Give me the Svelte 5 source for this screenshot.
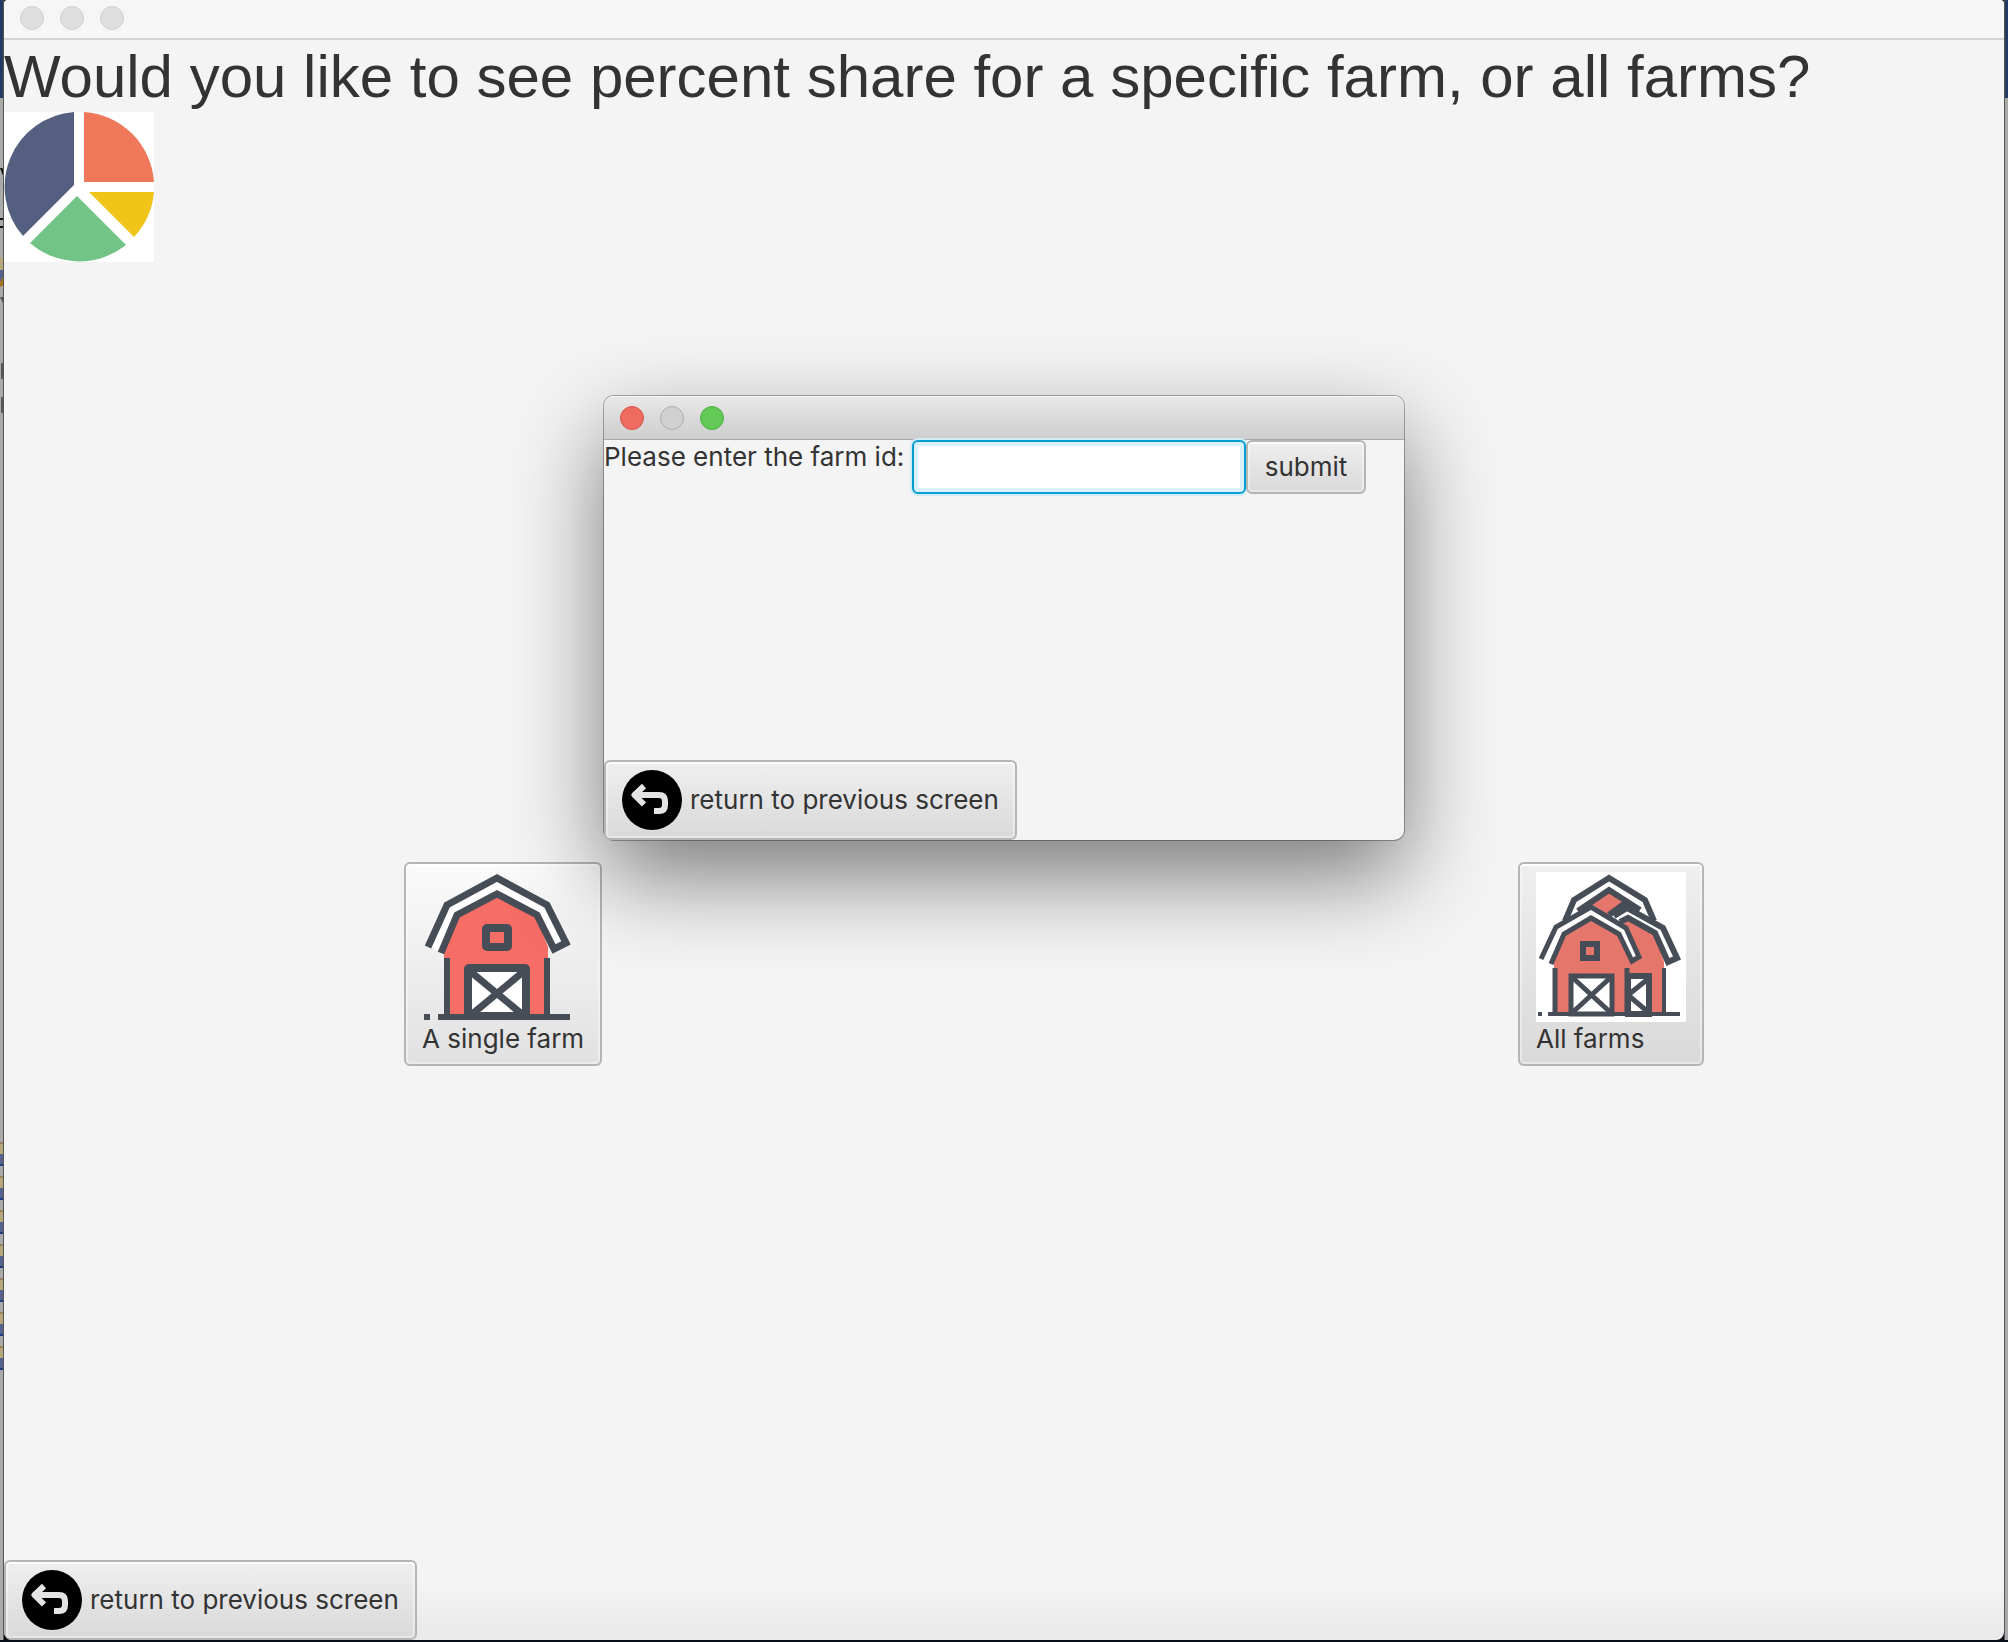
<script>
  let farmId = $state('');
  const windowDots = ['off', 'off', 'off'];
  const dialogDots = ['red', 'grey', 'green'];
</script>

{#snippet dots(kinds)}
  <span class="dots">
    {#each kinds as kind}
      <button class="dot {kind}" type="button" aria-label="Window control"></button>
    {/each}
  </span>
{/snippet}

{#snippet returnButton()}
  <button class="btn back" type="button">
    <svg width="60" height="60" viewBox="0 0 60 60" aria-hidden="true">
      <circle cx="30" cy="30" r="30" fill="#000" />
      <path d="M22 16 L12.500 25 L22 34.500 M13 25 H37 Q43 25 43 31 V35 Q43 41 37 41 H32" fill="none" stroke="#e4e4e4" stroke-width="6" stroke-linejoin="round" />
    </svg>
    <span>return to previous screen</span>
  </button>
{/snippet}

<div class="desktop">
  <div class="strip left">
    <svg width="4" height="440" viewBox="0 0 4 440" aria-hidden="true">
      <path d="M0 168 L4 178 V170 L2 168Z M0 218 H4 V220 H0Z M0 226 H4 V228 H0Z" fill="#111" />
      <path d="M0 258 H4 V270 H0Z" fill="#b6a77c" />
      <path d="M0 270 H4 V278 L2 285 H0Z" fill="#57628c" />
      <path d="M0 282 L4 275 V285 L0 287Z" fill="#a8721f" />
      <path d="M0 297 H4 V305Z M1 363 H4 V379 H1Z M1 397 H4 V413 H1Z" fill="#555" />
    </svg>
  </div>
  <main class="window">
    <header class="titlebar">{@render dots(windowDots)}</header>
    <h1>Would you like to see percent share for a specific farm, or all farms?</h1>
    <svg class="pie" width="150" height="150" viewBox="0 0 150 150" aria-hidden="true">
      <rect width="150" height="150" fill="#fff" />
      <path d="M70 0 V73 L19 124 A75 75 0 0 1 70 0Z" fill="#556080" />
      <path d="M80 0 A75 75 0 0 1 150 70 H80Z" fill="#f0785a" />
      <path d="M85 80 H150 A75 75 0 0 1 130 125Z" fill="#f0c419" />
      <path d="M73 84 L122 133 A75 75 0 0 1 26 131Z" fill="#71c386" />
    </svg>

    <div class="choices">
      <button class="btn farm single" type="button">
        <svg width="150" height="150" viewBox="0 0 150 150" aria-hidden="true">
          <path d="M22 147 V75 L36 43 L75 21 L114 43 L126 75 V147Z" fill="#f66d65" />
          <path d="M6 74 L25 33 L75 6 L125 33 L144 71 L132 77 L115 43 L75 22 L35 43 L18 80Z" fill="#fff" />
          <g fill="none" stroke="#464d57" stroke-width="7">
            <path d="M6 75 L25 33 L75 6 L125 33 L144 71 L132 77 L115 43 L75 22 L35 43 L19 81" />
            <path d="M25 86 V144 M125 86 V144 M2 145 H8 M16 145 H148" stroke-width="6" />
            <rect x="64" y="56" width="22" height="19" rx="1" stroke-width="8" />
          </g>
          <rect x="46" y="96" width="58" height="48" rx="1" fill="#fff" stroke="#464d57" stroke-width="8" />
          <path d="M49 100 L101 143 M101 100 L49 143" stroke="#464d57" stroke-width="7" />
        </svg>
        <span>A single farm</span>
      </button>

      <button class="btn farm" type="button">
        <svg width="150" height="150" viewBox="0 0 150 150" aria-hidden="true">
          <rect width="150" height="150" fill="#fff" />
          <path d="M54 31 L73 19 L93 31 L73 44Z" fill="#e5766b" />
          <path d="M88 44 L105 50 L120 65 L128 90 V142 H90Z" fill="#e5766b" />
          <g fill="none" stroke="#464d57" stroke-width="6">
            <path d="M29 49 L38 28 L73 6 L109 28 L118 49" />
            <path d="M42 39 L73 18 L104 38" />
            <path d="M92 29 L73 43" />
            <path d="M78 44 L91 36 L127 56 L141 86 L132 90 L119 61 L92 46 L84 50" fill="#fff" />
            <path d="M128 96 V142" stroke-width="4" />
            <path d="M92 104 H113 V142 H92Z" fill="#fff" />
            <path d="M92 123 L112 107 M92 123 L112 140" stroke-width="5" />
          </g>
          <path d="M18 142 V88 L29 62 L55 46 L83 62 L93 88 V142Z" fill="#e5766b" />
          <path d="M5 86 L19 55 L55 35 L90 56 L103 86 L95 90 L83 62 L55 46 L28 62 L15 90Z" fill="#fff" />
          <g fill="none" stroke="#464d57" stroke-width="6">
            <path d="M5 87 L20 55 L55 35 L90 56 L103 85 L96 89 L83 62 L55 46 L28 62 L15 92" stroke-width="5" />
            <path d="M19 96 V142 M91 96 V142" stroke-width="5" />
            <rect x="47" y="72" width="14" height="14" />
            <rect x="35" y="104" width="41" height="38" fill="#fff" stroke-width="5" />
            <path d="M37 106 L74 140 M74 106 L37 140" stroke-width="5" />
            <path d="M2 142 H6 M12 142 H144" stroke-width="4" />
          </g>
        </svg>
        <span>All farms</span>
      </button>
    </div>

    {@render returnButton()}

    <div class="dialog" role="dialog" aria-label="Farm id">
      <header class="dialog-bar">{@render dots(dialogDots)}</header>
      <form class="form" onsubmit={(e) => e.preventDefault()}>
        <label for="farm-id">Please enter the farm id:</label>
        <input id="farm-id" type="text" bind:value={farmId} />
        <button class="btn submit" type="submit">submit</button>
      </form>
      {@render returnButton()}
    </div>
  </main>
  <div class="strip right"></div>
</div>

<style>
  :global(body) { background: #0a0f17; }
  .desktop {
    box-sizing: border-box;
    display: flex;
    min-height: 100vh;
    padding-bottom: 2px;
    color: #333;
    font: 26px/30px Inter, "Liberation Sans", sans-serif;
  }
  .strip {
    box-sizing: border-box;
    flex: 0 0 4px;
    overflow: hidden;
    background: linear-gradient(#233a66 98px, #aaa 98px);
  }
  .strip svg { display: block; }
  .left {
    border-right: 1px solid #555;
    background:
      repeating-linear-gradient(#99815b 0 2px, #b6a77c 2px 12px, #57628c 12px 22px, #1d3b83 22px 24px, #aaa 24px 34px) 0 1142px / 4px 228px no-repeat,
      linear-gradient(#233a66 98px, #aaa 98px);
  }
  .right { border-left: 1px solid #555; }
  .window {
    position: relative;
    flex: 1;
    display: flex;
    flex-direction: column;
    align-items: flex-start;
    border-radius: 4px 4px 8px 8px;
    overflow: hidden;
    background: linear-gradient(to top, #e9e9e9, #f4f4f4 60px);
  }
  .titlebar {
    box-sizing: border-box;
    align-self: stretch;
    height: 40px;
    padding: 6px 16px;
    background: #f6f6f6;
    border-bottom: 2px solid #d3d3d3;
  }
  .dots { display: flex; gap: 16px; }
  .dot {
    width: 24px;
    height: 24px;
    padding: 0;
    border: 1px solid #cfcfcf;
    border-radius: 50%;
    background: #dedede;
  }
  .red { background: #ee6b5f; border-color: #d6554b; }
  .grey { background: #d0d0d0; border-color: #aeaeae; }
  .green { background: #62c956; border-color: #4fae43; }
  h1 {
    margin: 0;
    padding-top: 2px;
    font: 400 60px/70px "Liberation Sans", Arial, sans-serif;
  }
  .pie { display: block; }
  .choices {
    align-self: stretch;
    display: flex;
    justify-content: space-between;
    margin: 600px 300px auto 400px;
  }
  .btn {
    box-sizing: border-box;
    font: inherit;
    color: inherit;
    border: 2px solid #b5b5b5;
    border-radius: 6px;
    background: linear-gradient(#efefef, #d9d9d9);
    box-shadow: inset 0 0 0 2px #ffffff60, inset 0 2px 0 #fff;
  }
  .back {
    display: flex;
    align-items: center;
    gap: 8px;
    height: 80px;
    padding: 0 16px;
  }
  .farm {
    display: flex;
    flex-direction: column;
    align-items: flex-start;
    height: 204px;
    padding: 8px 16px;
  }
  .farm span { margin-top: 2px; }
  .single { background: linear-gradient(#fbfbfb, #e1e1e1); }
  .dialog {
    position: absolute;
    top: 396px;
    left: 30%;
    width: 40%;
    height: 444px;
    display: flex;
    flex-direction: column;
    align-items: flex-start;
    border-radius: 10px;
    background: #f4f4f4;
    box-shadow: 0 0 0 1px #0000004d, 0 36px 90px #00000080;
  }
  .dialog-bar {
    box-sizing: border-box;
    align-self: stretch;
    height: 44px;
    padding: 10px 16px;
    border-bottom: 1px solid #a9a9a9;
    border-radius: 10px 10px 0 0;
    background: linear-gradient(#e8e8e8, #cecece);
    box-shadow: inset 0 1px 0 #f6f6f6;
  }
  .form {
    display: flex;
    align-items: flex-start;
    margin-bottom: auto;
  }
  .form label { width: 308px; line-height: 34px; white-space: nowrap; }
  .form input {
    box-sizing: border-box;
    width: 334px;
    height: 54px;
    padding: 0 14px;
    font: inherit;
    border: 2px solid #039ed3;
    border-radius: 6px;
    outline: none;
    background: #fff;
    box-shadow: inset 0 0 0 4px #d9f1fb, 0 0 0 2px #d3ebf4;
  }
  .submit { width: 120px; height: 54px; padding: 0; }
</style>
